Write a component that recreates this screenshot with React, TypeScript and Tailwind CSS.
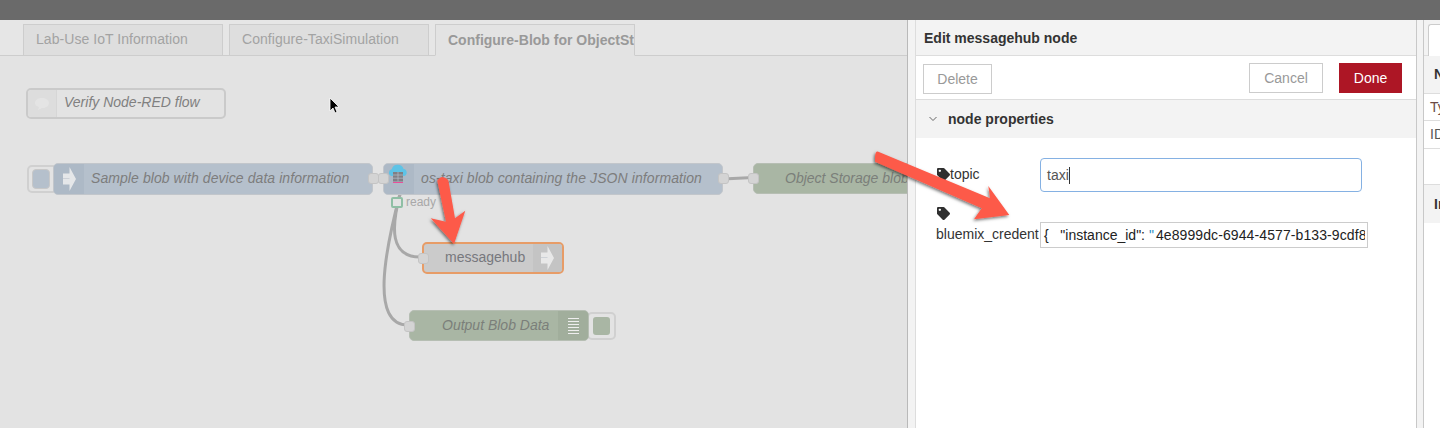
import React from "react";
import { FaTag } from "react-icons/fa";

const font = "font-['Liberation_Sans',Arial,sans-serif]";

function ArrowIcon() {
  return (
    <svg width="13" height="24" viewBox="0 0 13 24">
      <path d="M0 6.5h6.5V0L13 12 6.5 24v-6.5H0z" fill="#eeeeee" fillOpacity="0.85" />
      <path d="M0 11.5h6.5" stroke="#c6cbd2" strokeWidth="0.8" />
    </svg>
  );
}

function Port({ className }: { className: string }) {
  return <div className={`absolute w-[11px] h-[11px] rounded-[3px] bg-[#d4d4d4] border border-[#c4c4c4] ${className}`} />;
}

export default function App() {
  return (
    <div className={`relative w-[1440px] h-[428px] overflow-hidden flex flex-col ${font} bg-[#e3e3e3]`}>
      <div className="h-5 shrink-0 bg-[#6a6a6a]" />
      <div className="flex flex-1 min-h-0">
        {/* workspace */}
        <div className="w-[908px] shrink-0 flex flex-col border-r border-[#b9b9b9]">
          <div className="h-[36px] shrink-0 flex items-end gap-[6px] pl-[23px] border-b border-[#cdcdcd] bg-[#e6e6e6]">
            <div className="w-[200px] h-[32px] -mb-px border border-[#cdcdcd] bg-[#dedede] text-[14px] tracking-[0.05px] text-[#a3a3a3] pl-[12px] leading-[28px]">Lab-Use IoT Information</div>
            <div className="w-[200px] h-[32px] -mb-px border border-[#cdcdcd] bg-[#dedede] text-[14px] tracking-[0.05px] text-[#a3a3a3] pl-[12px] leading-[28px]">Configure-TaxiSimulation</div>
            <div className="w-[200px] h-[32px] -mb-px border border-[#cdcdcd] border-b-[#e3e3e3] bg-[#e3e3e3] text-[14px] font-bold text-[#999] pl-[12px] leading-[30px] overflow-hidden whitespace-nowrap">Configure-Blob for ObjectStorage</div>
          </div>
          <div className="relative flex-1 bg-[#e3e3e3] overflow-hidden">
            <svg className="absolute left-0 top-0" width="907" height="372" fill="none" stroke="#a8a8a8" strokeWidth="3">
              <path d="M723 123 L753 121.5" />
              <path d="M400 138 C 391 172, 390 201, 420 201" />
              <path d="M400 138 C 385 195, 370 269, 408 269" />
            </svg>

            {/* comment */}
            <div className="absolute left-[26px] top-[32px] w-[200px] h-[31px] rounded-[5px] border-2 border-[#cacaca] flex items-center">
              <div className="w-[29px] h-full bg-[#dddddd] rounded-l-[3px] border-r border-[#d6d6d6] flex items-center justify-center">
                <svg width="16" height="14" viewBox="0 0 16 14"><path d="M8 1c4 0 7 2 7 5s-3 5-7 5l-4 2 1-3C2 9 1 8 1 6c0-3 3-5 7-5z" fill="#e4e4e4" /></svg>
              </div>
              <span className="ml-[7px] pb-[2px] text-[14px] italic text-[#808080]">Verify Node-RED flow</span>
            </div>

            {/* inject */}
            <div className="absolute left-[27px] top-[109px] w-[31px] h-[28px] rounded-[5px] border-2 border-[#d0d0d0] bg-[#e3e3e3]">
              <div className="absolute left-[3px] top-[2px] w-[18px] h-[20px] rounded-[4px] bg-[#b5c0cc] border border-[#c8c8c8]" />
            </div>
            <div className="absolute left-[53px] top-[107px] w-[320px] h-[32px] rounded-[5px] bg-[#b5c0cc] border border-[#c2c6cb] flex items-center">
              <div className="w-[30px] h-full bg-[#adb9c6] rounded-l-[4px] flex items-center justify-center"><ArrowIcon /></div>
              <span className="ml-[7px] pb-px text-[14px] tracking-[0.075px] italic text-[#7d7d7d] whitespace-nowrap">Sample blob with device data information</span>
            </div>
            <Port className="left-[368px] top-[117px]" />

            {/* os-taxi */}
            <div className="absolute left-[383px] top-[107px] w-[340px] h-[32px] rounded-[5px] bg-[#b5c0cc] border border-[#c2c6cb] flex items-center">
              <div className="w-[30px] h-full bg-[#adb9c6] rounded-l-[4px]" />
              <span className="ml-[7px] pb-px text-[14px] tracking-[0.09px] italic text-[#7d7d7d] whitespace-nowrap">os-taxi blob containing the JSON information</span>
            </div>
            <svg className="absolute left-[388px] top-[108px]" width="20" height="22" viewBox="0 0 20 22">
              <path d="M3.5 12a3.5 3.5 0 0 1 .2-6.8A6.3 6.3 0 0 1 15.6 5a3.6 3.6 0 0 1 .6 7z" fill="#5ec3e6" />
              <rect x="5" y="8" width="10" height="9.5" fill="#808085" />
              <path d="M5 11h10M5 14.2h10M10 8v9.5" stroke="#b5c0cc" strokeWidth="0.7" />
              <path d="M5 18.5h10" stroke="#ea4f9a" strokeWidth="1" />
            </svg>
            <Port className="left-[378px] top-[117px]" />
            <Port className="left-[718px] top-[117px]" />

            {/* status */}
            <div className="absolute left-[391px] top-[141px] w-[12px] h-[11px] rounded-[2px] border-2 border-[#8fbfa5] bg-[#e3e3e3]" />
            <span className="absolute left-[406px] top-[138px] text-[12px] leading-[16px] text-[#a8a8a8]">ready</span>

            {/* object storage */}
            <div className="absolute left-[753px] top-[107px] w-[180px] h-[31px] rounded-[5px] bg-[#a9b6a4] border border-[#b6beb3] flex items-center">
              <span className="ml-[31px] text-[14px] italic text-[#7b7f7a] whitespace-nowrap">Object Storage blob</span>
            </div>
            <Port className="left-[748px] top-[117px]" />

            {/* messagehub */}
            <div className="absolute left-[422px] top-[186px] w-[142px] h-[32px] rounded-[5px] bg-[#cbcbcb] border-2 border-[#e79c67] flex items-center">
              <span className="ml-[21px] pb-px text-[14px] text-[#77787d] whitespace-nowrap">messagehub</span>
              <div className="ml-auto w-[29px] h-full bg-[#c4c4c4] rounded-r-[3px] flex items-center justify-center"><ArrowIcon /></div>
            </div>
            <Port className="left-[418px] top-[197px]" />

            {/* output */}
            <div className="absolute left-[587px] top-[256px] w-[29px] h-[28px] rounded-[5px] border-2 border-[#d0d0d0] bg-[#e3e3e3]">
              <div className="absolute left-[4px] top-[3px] w-[17px] h-[18px] rounded-[3px] bg-[#a9b6a4]" />
            </div>
            <div className="absolute left-[409px] top-[254px] w-[180px] h-[31px] rounded-[5px] bg-[#a9b6a4] border border-[#b6beb3] flex items-center">
              <span className="ml-[32px] text-[14px] italic text-[#7b7f7a] whitespace-nowrap">Output Blob Data</span>
              <div className="ml-auto w-[30px] h-full bg-[#a1ae9c] rounded-r-[4px] flex flex-col items-center justify-center gap-[2px]">
                <div className="w-[11px] h-px bg-[#eeeeee]" /><div className="w-[11px] h-px bg-[#eeeeee]" /><div className="w-[11px] h-px bg-[#eeeeee]" /><div className="w-[11px] h-px bg-[#eeeeee]" /><div className="w-[11px] h-px bg-[#eeeeee]" /><div className="w-[11px] h-px bg-[#eeeeee]" />
              </div>
            </div>
            <Port className="left-[404px] top-[265px]" />

            {/* cursor */}
            <svg className="absolute left-[328px] top-[41px]" width="13" height="19" viewBox="0 0 13 19">
              <path d="M2 1v13l3-3 2 5 2-1-2-5h4z" fill="#000" stroke="#fff" strokeWidth="0.8" />
            </svg>
          </div>
        </div>

        {/* edit tray */}
        <div className="w-[8px] shrink-0 bg-[#f3f3f3] border-r border-[#dddddd]" />
        <div className="w-[500px] shrink-0 flex flex-col bg-white text-[#333]">
          <div className="h-[36px] shrink-0 bg-[#f3f3f3] border-b border-[#dddddd] px-[8px] pt-px flex items-center text-[14px] font-bold">Edit messagehub node</div>
          <div className="h-[44px] shrink-0 bg-white border-b border-[#dddddd] pl-[7px] pr-[14px] pt-[7px] flex items-start">
            <div className="w-[69px] h-[30px] border border-[#cccccc] text-[14px] text-[#999] flex items-center justify-center mt-px">Delete</div>
            <div className="ml-auto w-[74px] h-[30px] border border-[#cccccc] text-[14px] text-[#999] flex items-center justify-center">Cancel</div>
            <div className="ml-[16px] w-[63px] h-[30px] bg-[#ad1625] text-[14px] text-white flex items-center justify-center">Done</div>
          </div>
          <div className="h-[38px] shrink-0 bg-[#f3f3f3] flex items-center pl-[13px] text-[14px] font-bold">
            <svg width="8" height="6" viewBox="0 0 8 6" className="mr-[11px]" fill="none" stroke="#666" strokeWidth="1"><path d="M0.5 1 L4 4.5 L7.5 1" /></svg>
            node properties
          </div>
          <div className="flex-1 relative">
            <div className="absolute left-[21px] top-[26px] flex items-center text-[14px]">
              <FaTag size={13} color="#2f2f2f" />
              <span>topic</span>
            </div>
            <div className="absolute left-[124px] top-[20px] w-[322px] h-[34px] rounded-[4px] border border-[#85b1e3] text-[14px] pl-[6px] text-[#555] flex items-center">
              taxi<span className="w-px h-[17px] bg-[#333]" />
            </div>
            <FaTag size={13} color="#2f2f2f" className="absolute left-[21px] top-[69px]" />
            <span className="absolute left-[20px] top-[86px] text-[14px] leading-[20px] text-[#333]">bluemix_credent</span>
            <div className="absolute left-[124px] top-[84px] w-[328px] h-[26px] border border-[#cccccc] bg-white px-[2px]">
              <div className="overflow-hidden whitespace-pre text-[14px] leading-[25px] text-[#222]">
                <span className="ml-px">{"{   \"instance_id\": "}</span><span className="text-[#2a8fc4]">"</span><span className="ml-[2px] tracking-[0.1px]">4e8999dc-6944-4577-b133-9cdf8e2a41</span>
              </div>
            </div>
          </div>
        </div>

        {/* side */}
        <div className="w-[8px] shrink-0 bg-[#f3f3f3] border-x border-[#c8c8c8]" />
        <div className="flex-1 flex flex-col bg-white text-[#333] text-[14px]">
          <div className="h-[36px] shrink-0 bg-[#f3f3f3] border-b border-[#dddddd] pl-[4px] flex items-end">
            <div className="w-full h-[32px] -mb-px bg-white border-l border-t border-[#cccccc] rounded-tl-[3px]" />
          </div>
          <div className="h-[38px] shrink-0 bg-[#f3f3f3] border-b border-[#dddddd] pl-[10px] flex items-center font-bold">N</div>
          <div className="h-[27px] shrink-0 border-b border-[#dddddd] pl-[6px] flex items-center text-[#6b4a44]">Ty</div>
          <div className="h-[28px] shrink-0 border-b border-[#dddddd] pl-[6px] flex items-center text-[#555]">ID</div>
          <div className="h-[36px] shrink-0 border-b border-[#dddddd]" />
          <div className="h-[38px] shrink-0 bg-[#f3f3f3] pl-[10px] flex items-center font-bold">In</div>
        </div>
      </div>

      {/* annotation arrows */}
      <svg className="absolute left-0 top-0 pointer-events-none" width="1440" height="428">
        <defs>
          <filter id="s" x="-30%" y="-30%" width="160%" height="160%">
            <feDropShadow dx="-1" dy="1.5" stdDeviation="1.5" floodColor="#000" floodOpacity="0.55" />
          </filter>
        </defs>
        <path filter="url(#s)" fill="#fd5a4a" d="M437.3 180.7 Q441.5 173.5 448.3 180 L455 218.3 L465.3 210.7 L454 244 L430.7 218.3 L446 221.7 Z" />
        <path filter="url(#s)" fill="#fd5a4a" d="M875 156.7 Q875.5 150.5 878.3 151.7 L990 198.3 L988.3 186 L1009.3 215 L974 219.3 L981.7 208.3 L875 161.7 Z" />
      </svg>
    </div>
  );
}
